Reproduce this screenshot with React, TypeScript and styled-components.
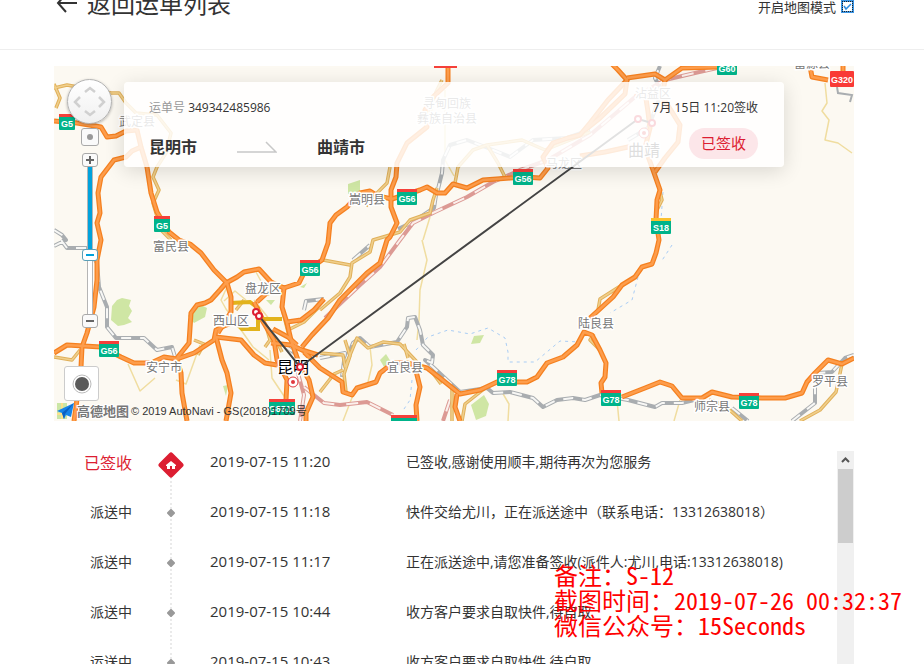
import React, { useState } from 'react';
import styled, { createGlobalStyle } from 'styled-components';

const RED = '#dc1e32';

const GlobalStyle = createGlobalStyle`
  *, *::before, *::after { box-sizing: border-box; }
  body {
    margin: 0;
    background: #fff;
    color: #333;
    font-family: "Open Sans", "Noto Sans CJK SC", sans-serif;
    font-size: 14px;
  }
`;

const Page = styled.div`
  position: relative;
  display: flex;
  flex-direction: column;
  height: 100vh;
  overflow: hidden;
`;

const Header = styled.header`
  display: flex;
  flex: none;
  align-items: center;
  justify-content: space-between;
  height: 92px;
  margin-top: -42px;
  padding: 0 70px 0 54px;
  border-bottom: 1px solid #eee;
`;

const BackLink = styled.a`
  display: flex;
  align-items: center;
  gap: 8px;
  color: #333;
  font-size: 24px;
  line-height: 36px;
  text-decoration: none;
`;

const ModeLabel = styled.label`
  display: flex;
  align-items: center;
  gap: 5px;
  font-size: 13px;
  line-height: 20px;
  margin-top: 6px;
`;

const TickBox = styled.span`
  display: grid;
  width: 13px;
  height: 13px;
  > * { grid-area: 1 / 1; }
  svg { pointer-events: none; }
`;

const Tick = styled.input`
  appearance: none;
  width: 13px;
  height: 13px;
  margin: 0;
  border: 2px solid #3d97e6;
  background: #fff;
  outline: 1px dotted #222;
  outline-offset: -2px;
  &:not(:checked) + svg { display: none; }
`;

const Main = styled.main`
  display: flex;
  flex: 1;
  flex-direction: column;
  gap: 30px;
  min-height: 0;
  padding: 16px 70px 0 54px;
`;

const MapPanel = styled.section`
  position: relative;
  flex: none;
  height: 355px;
  overflow: hidden;
  background: #fcf9f2;
`;

const MapDrawing = styled.svg`
  display: block;
  width: 100%;
  height: 100%;
`;

const Controls = styled.div`
  position: absolute;
  top: 13px;
  left: 10px;
  display: flex;
  flex-direction: column;
  align-items: center;
  width: 51px;
`;

const ControlButton = styled.button<{ $w: number; $h: number; $gap?: number }>`
  display: grid;
  place-items: center;
  width: ${(p) => p.$w}px;
  height: ${(p) => p.$h}px;
  margin: ${(p) => p.$gap ?? 0}px 0 0;
  padding: 0;
  border: 1px solid #a9a9a9;
  border-radius: 3px;
  background: #fafafa;
`;

const Compass = styled(ControlButton)`
  border-color: #b4b4b4;
  border-radius: 50%;
  background: linear-gradient(#fff, #f0f0f0);
  box-shadow: 0 1px 3px rgba(0, 0, 0, 0.3);
`;

const ZoomRange = styled.input`
  appearance: none;
  writing-mode: vertical-lr;
  direction: rtl;
  width: 16px;
  height: 147px;
  margin: 0;
  background: transparent;
  &::-webkit-slider-runnable-track {
    width: 6px;
    border: solid #b5b5b5;
    border-width: 0 1px;
    background: linear-gradient(#00a2dc var(--split), #fff var(--split)) border-box;
  }
  &::-webkit-slider-thumb {
    appearance: none;
    width: 16px;
    height: 12px;
    margin-left: -6px;
    border: 1px solid #5a9fb8;
    border-radius: 3px;
    background: linear-gradient(#00a2dc, #00a2dc) center / 8px 2px no-repeat #fff;
  }
`;

const LocateButton = styled(ControlButton)`
  position: absolute;
  bottom: 20px;
  left: 10px;
  border-color: #ccc;
  background: #fff;
`;

const MapCredit = styled.div`
  position: absolute;
  bottom: 0;
  left: 2px;
  display: flex;
  align-items: center;
  gap: 2px;
  height: 20px;
  color: #333;
  font: 11px/16px "Liberation Sans", "Noto Sans CJK SC", sans-serif;
  white-space: nowrap;
`;

const Brand = styled.strong`
  color: #777;
  font: 700 13px/16px "Noto Sans CJK SC", sans-serif;
  -webkit-text-stroke: 2px #fff;
  paint-order: stroke fill;
`;

const Card = styled.div`
  position: absolute;
  top: 16px;
  right: 70px;
  left: 70px;
  display: flex;
  justify-content: space-between;
  height: 85px;
  padding: 16px 26px 0 25px;
  border-radius: 4px;
  background: rgba(255, 255, 255, 0.84);
  box-shadow: 0 4px 20px rgba(0, 0, 0, 0.14);
`;

const CardColumn = styled.div<{ $gap: number; $end?: boolean }>`
  display: flex;
  flex-direction: column;
  align-items: ${(p) => (p.$end ? 'flex-end' : 'flex-start')};
  gap: ${(p) => p.$gap}px;
  font-size: 12px;
  line-height: 20px;
`;

const Muted = styled.span`
  color: #999;
`;

const Route = styled.div`
  display: flex;
  align-items: center;
  gap: 40px;
  font-size: 16px;
  font-weight: 700;
  line-height: 24px;
`;

const Badge = styled.span`
  padding: 0 12px;
  border-radius: 16px;
  background: #fce6e9;
  color: ${RED};
  font-size: 15px;
  line-height: 31px;
`;

const Log = styled.section`
  display: flex;
  flex: 1;
  min-height: 0;
  overflow: hidden;
`;

const LogList = styled.ol`
  flex: 1;
  min-width: 0;
  margin: 0;
  padding: 0;
  list-style: none;
`;

const LogRow = styled.li`
  display: grid;
  grid-template-columns: 78px 78px 196px 1fr;
  height: 50px;
  line-height: 22px;
  white-space: nowrap;
`;

const Status = styled.span<{ $done?: boolean }>`
  color: ${(p) => (p.$done ? RED : 'inherit')};
  font-size: ${(p) => (p.$done ? 16 : 14)}px;
  line-height: ${(p) => (p.$done ? 24 : 22)}px;
  text-align: right;
`;

const Rail = styled.span<{ $top: number }>`
  display: flex;
  align-items: flex-start;
  justify-content: center;
  padding-top: ${(p) => p.$top}px;
  background: repeating-linear-gradient(transparent 0 2px, #eaeaea 2px 4px) center / 2px 100% no-repeat;
`;

const Time = styled.time`
  font-size: 15px;
  line-height: 20px;
`;

const ScrollTrack = styled.div`
  flex: none;
  width: 17px;
  background: #f0f0f0;
`;

const ScrollUp = styled.button`
  display: grid;
  place-items: center;
  width: 17px;
  height: 18px;
  padding: 0;
  border: 0;
  background: none;
`;

const ScrollThumb = styled.div`
  width: 15px;
  height: 74px;
  margin: 0 auto;
  background: #cdcdcd;
`;

const Notes = styled.div`
  position: absolute;
  top: 562px;
  left: 554px;
  color: #f00;
  font-family: "Noto Sans Mono CJK SC", "DejaVu Sans Mono", "Noto Sans CJK SC", monospace;
  font-size: 24px;
  font-weight: 300;
  line-height: 25px;
  white-space: nowrap;
  pointer-events: none;
`;

const Note = styled.p`
  margin: 0;
`;

const HIGHWAYS = [
  'M54 121L77 123L101 127L107 137L116 136L126 131L137 130L141 147L147 167L151 193L157 212L169 232L179 240L190 244L201 253L214 270L227 283',
  'M141 147L132 151L126 157L114 160L101 177L98 193L100 213L97 223L101 240L97 260L97 280L94 307L87 333L82 347L81 367L76 407L74 421',
  'M54 353L67 345L101 347L121 357L134 363L151 363L164 357L177 359L194 353L214 340L216 330L224 326L234 322',
  'M177 358L189 343L191 313L197 305L205 303L211 300L220 290L226 283L237 277L244 272L259 269L271 282L284 288L299 283L304 273L322 260L328 243L330 223L336 215L347 207L360 193L370 191L378 196L392 199L420 190L427 187L437 193L445 193L453 184L467 188L483 180L510 178L525 177L540 178L548 168L543 157L553 143L568 138L580 135L590 123L608 100L627 80L618 70L612 64',
  'M448 66L448 83L433 97L425 110L427 127L407 143L397 163L396 177L391 190L391 207L397 223L390 237L387 240L380 263L367 273L353 287L340 300L328 318L312 335L302 347',
  'M627 78L655 74L665 80L682 68L718 67',
  'M580 156L605 152L628 147L645 148L653 170L660 190L657 200L656 220L659 240L656 253L652 264L642 267L635 277L622 285L613 297L590 318',
  'M665 80L662 97L672 112L680 125L678 142L665 158L655 172',
  'M635 97L645 92L648 112L650 128L645 148M627 80L625 94L600 118L585 130',
  'M602 393L601 383L605 377L606 363L600 350L592 335L584 332L577 345L563 357L547 363L537 377L527 382L497 382L480 390L460 394L440 378L427 368L407 363L393 363L380 373L376 382L357 388L352 395L343 392L342 382L320 368L304 352',
  'M415 367L420 387L416 405L417 421M457 394L455 407L460 421',
  'M622 397L645 388L660 382L672 386L682 398L702 398L712 392L732 397L762 398L785 398L802 393L807 382L815 373L828 360L842 364L854 358',
  'M227 283L231 297L231 312L218 333M216 337L241 340L254 355L265 363L277 365',
  'M216 337L222 360L227 373L231 393L226 421M177 360L181 373L182 393L187 421',
  'M269 291L257 302M284 288L282 307L287 323L291 340L299 363L309 380L313 397L306 413L306 421',
  'M262 320L274 340L277 360L287 380L286 400M287 322L301 320L314 310L324 299',
  'M271 343L291 345L302 350L318 355M273 329L288 337L297 345M254 302L262 318',
  'M810 66L812 77L828 80M843 66L843 72',
];

const LOCAL_ROADS = [
  'M54 88L67 85L111 93L119 93L126 103L136 113L157 115L171 133L166 153L157 167L153 177L159 190L153 203L161 230L171 240',
  'M54 84L60 98L56 108M390 167L387 183L377 193L366 206',
  'M455 183L458 167L473 150L487 145L498 163L505 177M487 145L522 140L545 150L590 132',
  'M437 188L433 200L430 213L410 220L400 232L373 240L370 252L352 263L350 277L340 293L320 310M323 260L350 265',
  'M320 353L343 355L345 367L357 338L368 348L383 342L400 344L417 362',
  'M345 340L350 356L344 374L346 392M320 392L334 374L343 370M404 344L408 358',
  'M236 310L244 300M282 308L290 340M288 330L304 322L318 308M274 336L282 352',
  'M194 340L204 344L198 355M54 357L72 360L80 350M600 350L590 340L594 334M598 310L600 299L622 285',
  'M440 378L452 388L452 421M484 389L465 404L462 421M432 372L441 384',
  'M842 364L836 392L820 410L800 421M709 400L724 405L742 421M658 184L662 200L657 210',
  'M442 80L436 92L430 112M265 347L270 340L266 326',
];

const THIN_ROADS = [
  'M422 240L427 260L420 290L419 320L417 340M445 90L445 160L454 176M430 217L423 240',
  'M825 83L827 103L822 111L829 120L825 140L838 143L852 153',
  'M228 285L221 300L226 309L238 325M254 300L270 320M246 300L235 291L224 301',
  'M128 364L140 391L155 378M200 345L186 384L176 380M239 327L253 347L269 360',
  'M370 347L372 365L368 382M353 395L343 421M502 392L509 404L508 421M617 400L619 421M680 400L674 421',
  'M256 272L269 296M270 350L272 378L284 396L292 410',
];

const GREY_RAIL = [
  'M54 230L62 235L66 240L54 246M61 240L67 248L87 248L97 263L99 287L107 307L107 327L116 338L144 338L157 350L172 347L176 360',
  'M320 358L345 353L342 377M345 363L353 343L360 338L370 347L397 342L407 327L408 318L415 317L420 330L423 345L433 355L432 363L425 360L433 367L447 380L460 392L487 388L493 393L510 392L533 398L543 407L557 400L573 398L585 400L600 395L628 400L655 407L662 403L682 403L702 398',
  'M732 408L748 421M792 421L815 403L815 383L818 373L832 372L845 358L854 355',
  'M437 193L442 173L443 160L450 145L467 140L493 150L510 157L533 140L567 138L590 130',
  'M436 195L434 208L413 222L398 229M353 260L370 245M304 310L306 301L324 299M628 140L648 128L662 92L655 78L660 66',
  'M284 345L297 355',
];

const RED_RAIL = [
  'M717 68L695 73L665 80L635 97L590 135L548 160L520 170L493 182L467 197L435 212L413 223L400 240L380 267L360 285L325 318',
  'M304 387L324 403L340 405L367 402L393 415M450 400L443 421M297 370L304 395L300 421',
];

const STREAMS = 'M416 350L428 337L448 330L470 334L488 328L505 338L508 352L508 362L535 362L560 341L580 342M412 380L410 400L402 412M638 277L632 300L610 313M672 245L661 262M663 192L661 220';

const PARKS = [
  'M112 306L117 300L122 298L131 300L129 306L132 311L128 318L132 322L124 325L118 326L111 320Z',
  'M188 316L197 303L207 308L205 317L194 323Z',
  'M348 184L360 180L360 192L348 194Z',
  'M471 344L474 336L484 335L480 343Z',
  'M471 405L484 395L489 404L486 416L476 420Z',
  'M380 360L386 354L391 362L384 367Z',
  'M266 300L275 300L271 305ZM300 287L307 283L304 288ZM223 386L228 385L226 396Z',
];

const TOWNS: [number, number, string][] = [
  [137, 126, '武定县'], [171, 251, '富民县'], [367, 204, '嵩明县'], [447, 108, '寻甸回族'],
  [447, 123, '彝族自治县'], [564, 168, '马龙区'], [653, 98, '沾益区'], [263, 293, '盘龙区'],
  [231, 325, '西山区'], [164, 372, '安宁市'], [405, 372, '宜良县'], [596, 328, '陆良县'],
  [712, 411, '师宗县'], [830, 386, '罗平县'], [812, 68, '富源县'],
];

const SHIELDS: [number, number, string, string?][] = [
  [67, 122, 'G5'], [162, 224, 'G5'], [407, 197, 'G56'], [523, 177, 'G56'], [310, 268, 'G56'],
  [109, 349, 'G56'], [507, 378, 'G78'], [611, 398, 'G78'], [749, 401, 'G78'], [727, 67, 'G60'],
  [661, 226, 'S18', '#fbc02d'], [282, 407, 'G8511'], [404, 423, 'G8011'],
];

function Paths({ list, color, width, dash }: { list: string[]; color: string; width: number; dash?: string }) {
  return (
    <g fill="none" stroke={color} strokeWidth={width} strokeDasharray={dash} strokeLinejoin="round">
      {list.map((d) => <path key={d} d={d} />)}
    </g>
  );
}

function RoadMap() {
  return (
    <MapDrawing viewBox="54 66 800 355" preserveAspectRatio="xMidYMid slice" role="img" aria-label="昆明市至曲靖市路线图">
      {PARKS.map((d) => <path key={d} d={d} fill="#cfe6a4" />)}
      <path d={STREAMS} fill="none" stroke="#a9cdf5" strokeDasharray="3 4" />
      <Paths list={THIN_ROADS} color="#f0dda0" width={1.5} />
      <Paths list={GREY_RAIL} color="#a9adb0" width={4} />
      <Paths list={GREY_RAIL} color="#f7f7f5" width={2} dash="10 9" />
      <path d="M837 87L838 93L852 95L850 102" fill="none" stroke="#a9adb0" strokeWidth="2" />
      <Paths list={RED_RAIL} color="#dc9a94" width={4} />
      <Paths list={RED_RAIL} color="#fbf0ec" width={2} dash="12 12" />
      <Paths list={LOCAL_ROADS} color="#e0b05a" width={3.5} />
      <Paths list={LOCAL_ROADS} color="#f0cf8c" width={1.5} />
      <path d="M231 312V303L250 302L258 308V329H242L233 320M258 319H282" fill="none" stroke="#e2b31c" strokeWidth="4" />
      <Paths list={HIGHWAYS} color="#f5801f" width={5} />
      <Paths list={HIGHWAYS} color="#fd9d4c" width={2.5} />

      <g fontFamily='"Noto Sans CJK SC", sans-serif' textAnchor="middle" stroke="#fff" strokeWidth="3" strokeLinejoin="round" paintOrder="stroke">
        {TOWNS.map(([x, y, name]) => <text key={name} x={x} y={y} fontSize="12" fill="#777">{name}</text>)}
        <text x="644" y="156" fontSize="16" fill="#333">曲靖</text>
        <text x="293" y="373" fontSize="16" fill="#000">昆明</text>
      </g>

      {SHIELDS.map(([x, y, code, top = '#f5403a']) => {
        const w = code.length === 2 ? 16 : code.length === 3 ? 20 : 26;
        return (
          <g key={`${code}-${x}`}>
            <rect x={x - w / 2} y={y - 8} width={w} height="16" rx="1" fill="#00b38a" />
            <rect x={x - w / 2} y={y - 8} width={w} height="3" fill={top} />
            <text x={x} y={y + 5} textAnchor="middle" fontFamily='"Liberation Sans", sans-serif' fontSize="9" fontWeight="700" fill="#fff">{code}</text>
          </g>
        );
      })}
      <rect x="434" y="66" width="23" height="2" fill="#f5403a" />
      <rect x="830" y="71" width="24" height="16" rx="1" fill="#f93a36" />
      <text x="842" y="83" textAnchor="middle" fontFamily='"Liberation Sans", sans-serif' fontSize="9" fontWeight="700" fill="#fff">G320</text>

      <path d="M256 312L259 316L300 367L638 119L652 123" fill="none" stroke="#444" strokeWidth="2" />
      {[[256, 312], [259, 316], [300, 367], [638, 119], [652, 123]].map(([x, y]) => (
        <circle key={x} cx={x} cy={y} r="3" fill="#fff" stroke={RED} strokeWidth="2" />
      ))}
      {[[293, 382], [644, 133]].map(([x, y]) => (
        <g key={x}>
          <circle cx={x} cy={y} r="5" fill="#fff" stroke="#e0393e" />
          <circle cx={x} cy={y} r="2" fill="#e0393e" />
        </g>
      ))}
    </MapDrawing>
  );
}

function MapControls() {
  const [zoom, setZoom] = useState(39);
  return (
    <>
      <Controls>
        <Compass $w={45} $h={45} aria-label="平移地图">
          <svg width="43" height="43" viewBox="0 0 43 43" fill="none" stroke="#d0d0d0" strokeWidth="2.5">
            <path d="M17 12L22 8L27 12M17 31L22 35L27 31M12 17L7 22L12 27M31 17L36 22L31 27" />
          </svg>
        </Compass>
        <ControlButton $w={18} $h={18} $gap={4} aria-label="定位城市">
          <svg width="8" height="8"><circle cx="4" cy="4" r="3" fill="#999" /></svg>
        </ControlButton>
        <ControlButton $w={16} $h={14} $gap={7} aria-label="放大">
          <svg width="10" height="10"><path d="M1 5H9M5 1V9" stroke="#666" strokeWidth="2" /></svg>
        </ControlButton>
        <ZoomRange
          type="range"
          aria-label="缩放级别"
          value={zoom}
          onChange={(e) => setZoom(Number(e.target.value))}
          style={{ '--split': `${100 - zoom}%` } as React.CSSProperties}
        />
        <ControlButton $w={16} $h={14} aria-label="缩小">
          <svg width="10" height="10"><path d="M1 5H9" stroke="#666" strokeWidth="2" /></svg>
        </ControlButton>
      </Controls>
      <LocateButton $w={35} $h={35} aria-label="我的位置">
        <svg width="20" height="20">
          <circle cx="10" cy="10" r="9" fill="#fff" stroke="#bbb" />
          <circle cx="10" cy="10" r="7" fill="#5a5a5a" />
        </svg>
      </LocateButton>
    </>
  );
}

const RECORDS = [
  { status: '已签收', time: '2019-07-15 11:20', text: '已签收,感谢使用顺丰,期待再次为您服务', done: true },
  { status: '派送中', time: '2019-07-15 11:18', text: '快件交给尤川，正在派送途中（联系电话：13312638018）' },
  { status: '派送中', time: '2019-07-15 11:17', text: '正在派送途中,请您准备签收(派件人:尤川,电话:13312638018)' },
  { status: '派送中', time: '2019-07-15 10:44', text: '收方客户要求自取快件,待自取' },
  { status: '运送中', time: '2019-07-15 10:43', text: '收方客户要求自取快件,待自取' },
];

export default function App() {
  return (
    <Page>
      <GlobalStyle />
      <Header>
        <BackLink href="#list">
          <svg width="25" height="24" viewBox="0 0 25 24" fill="none" stroke="#333" strokeWidth="2">
            <path d="M23 11H4M12 2L4 11L12 20" />
          </svg>
          返回运单列表
        </BackLink>
        <ModeLabel>
          开启地图模式
          <TickBox>
            <Tick type="checkbox" defaultChecked />
            <svg width="13" height="13" fill="none" stroke="#2b8be0" strokeWidth="1.5"><path d="M3 6L5 9L10 4" /></svg>
          </TickBox>
        </ModeLabel>
      </Header>
      <Main>
        <MapPanel>
          <RoadMap />
          <MapControls />
          <MapCredit>
            <svg width="19" height="18" viewBox="0 0 19 18">
              <path d="M1 1H11V17H1Z" fill="#cbe6a5" />
              <path d="M6 1V17M1 12H11" stroke="#fbe08a" strokeWidth="2" />
              <path d="M18 1L1 9L6 11L8 17L10 13L15 15Z" fill="#1684e8" />
              <path d="M18 1L6 11L8 17L9 12Z" fill="#0b5fc0" />
            </svg>
            <Brand>高德地图</Brand>
            <span>© 2019 AutoNavi - GS(2018)1709号</span>
          </MapCredit>
          <Card>
            <CardColumn $gap={17}>
              <div><Muted>运单号</Muted> 349342485986</div>
              <Route>
                昆明市
                <svg width="40" height="12" fill="none" stroke="#c8c8c8" strokeWidth="1.5"><path d="M0 11H39L29 1" /></svg>
                曲靖市
              </Route>
            </CardColumn>
            <CardColumn $gap={10} $end>
              <div>7月 15日 11:20签收</div>
              <Badge>已签收</Badge>
            </CardColumn>
          </Card>
        </MapPanel>
        <Log>
          <LogList>
            {RECORDS.map((r) => (
              <LogRow key={r.time}>
                <Status $done={r.done}>{r.status}</Status>
                <Rail $top={r.done ? 1 : 8}>
                  {r.done ? (
                    <svg width="26" height="26" viewBox="0 0 26 26">
                      <path d="M13 3L23 13L13 23L3 13Z" fill={RED} stroke={RED} strokeWidth="5" strokeLinejoin="round" />
                      <path d="M13 9L8 13V14H9V17H12V14H14V17H17V14H18V13Z" fill="#fff" />
                    </svg>
                  ) : (
                    <svg width="8" height="8" viewBox="0 0 8 8">
                      <path d="M4 1L7 4L4 7L1 4Z" fill="#999" stroke="#999" strokeWidth="2" strokeLinejoin="round" />
                    </svg>
                  )}
                </Rail>
                <Time>{r.time}</Time>
                <span>{r.text}</span>
              </LogRow>
            ))}
          </LogList>
          <ScrollTrack>
            <ScrollUp aria-label="向上滚动">
              <svg width="9" height="6" fill="none" stroke="#555" strokeWidth="2"><path d="M1 5L4.5 1.5L8 5" /></svg>
            </ScrollUp>
            <ScrollThumb />
          </ScrollTrack>
        </Log>
      </Main>
      <Notes>
        <Note>备注：S-12</Note>
        <Note>截图时间：2019-07-26 00:32:37</Note>
        <Note>微信公众号：15Seconds</Note>
      </Notes>
    </Page>
  );
}
